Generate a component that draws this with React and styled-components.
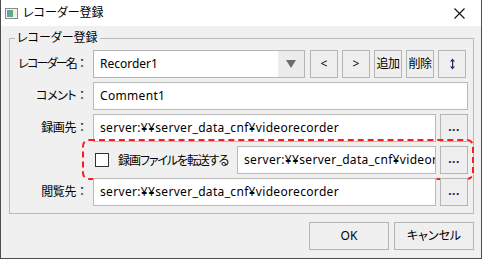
import React from "react";
import styled, { createGlobalStyle } from "styled-components";

const Global = createGlobalStyle`
  html, body { margin: 0; padding: 0; background: #f0f0f0; }
  * { box-sizing: border-box; }
  body {
    font-family: "Noto Sans", "Noto Sans CJK JP", sans-serif;
    font-size: 12px;
    font-feature-settings: "palt";
    color: #000;
  }
`;

const Window = styled.div`
  width: 482px;
  height: 259px;
  display: flex;
  flex-direction: column;
  border: 1px solid #4d4d4d;
  border-top: none;
  background: #f0f0f0;
`;

const TitleBar = styled.div`
  height: 26px;
  flex: none;
  background: #fff;
  display: flex;
  align-items: center;
  padding: 0 0 0 4px;
`;

const TitleText = styled.span`
  margin-left: 5px;
  font-size: 12px;
  flex: 1;
  line-height: 16px;
`;

const CloseButton = styled.div`
  width: 46px;
  height: 26px;
  display: flex;
  align-items: center;
  justify-content: center;
  margin-right: -1px;
`;

const Body = styled.div`
  flex: 1;
  display: flex;
  flex-direction: column;
  padding: 4px 7px 0 8px;
`;

const Group = styled.fieldset`
  margin: 0;
  padding: 4px 5px 7px 0;
  border: 1px solid #b9b9b9;
  min-width: 0;
  height: 184px;
`;

const Legend = styled.legend`
  padding: 0 2px;
  margin-left: 5px;
  line-height: 16px;
  font-size: 12px;
`;

const Form = styled.div`
  display: grid;
  grid-template-columns: 77px 1fr;
  column-gap: 6px;
  row-gap: 4px;
  grid-auto-rows: 28px;
  align-items: stretch;
`;

const Label = styled.div`
  display: flex;
  align-items: center;
  justify-content: flex-end;
  white-space: nowrap;
  line-height: 16px;
  letter-spacing: ${(p) => p.$ls ?? 0}px;
`;

const Colon = styled.span`
  font-feature-settings: normal;
  letter-spacing: 0;
  width: 11px;
  display: inline-block;
`;

const Field = styled.div`
  position: relative;
  display: flex;
  gap: 4px;
  align-items: stretch;
  min-width: 0;
`;

const TextBox = styled.div`
  flex: 1;
  min-width: 0;
  background: #fff;
  border: 1px solid #b9b9b9;
  display: flex;
  align-items: center;
  padding-left: 6px;
  white-space: nowrap;
  overflow: hidden;
  line-height: 16px;
  letter-spacing: 0.33px;
`;

const Combo = styled.div`
  width: 212px;
  flex: none;
  display: flex;
  border: 1px solid #b4b4b4;
  background: #fff;
  margin-right: 1px;
`;

const ComboText = styled.div`
  flex: 1;
  display: flex;
  align-items: center;
  padding-left: 6px;
  line-height: 16px;
`;

const ComboArrow = styled.div`
  width: 26px;
  background: #ececec;
  display: flex;
  align-items: center;
  justify-content: center;
`;

const Btn = styled.div`
  width: 28px;
  flex: none;
  background: #efefef;
  border: 1px solid #b4b4b4;
  display: flex;
  align-items: center;
  justify-content: center;
  white-space: nowrap;
  line-height: 16px;
  font-size: 12px;
  letter-spacing: ${(p) => (p.$tight ? "-0.5px" : "0")};
`;

const Dots = styled.span`
  font-weight: bold;
  letter-spacing: 0.5px;
  color: #1a1a40;
  margin-top: -3px;
`;

const CheckArea = styled.div`
  width: 140px;
  flex: none;
  display: flex;
  align-items: center;
  padding-left: 2px;
  gap: 9px;
  white-space: nowrap;
  letter-spacing: -1.1px;
`;

const CheckBox = styled.div`
  width: 14px;
  height: 14px;
  border: 1px solid #333;
  background: #fff;
  flex: none;
`;

const Highlight = styled.div`
  position: absolute;
  left: -11px;
  right: -6px;
  top: -7px;
  bottom: -6px;
  border: 2px dashed #ff1a1a;
  border-radius: 7px;
  pointer-events: none;
`;

const Footer = styled.div`
  display: flex;
  justify-content: flex-end;
  gap: 5px;
  margin-top: 8px;
`;

const DialogBtn = styled.div`
  width: 80px;
  height: 28px;
  background: #efefef;
  border: 1px solid #b4b4b4;
  display: flex;
  align-items: center;
  justify-content: center;
  line-height: 16px;
`;

const AppIcon = () => (
  <svg width="13" height="11" viewBox="0 0 13 11">
    <rect x="0.5" y="0.5" width="12" height="10" fill="#f4f4f4" stroke="#8a8a8a" />
    <rect x="2" y="2" width="3" height="7" fill="#5aa0c8" />
    <rect x="5" y="2" width="3" height="7" fill="#6fa86a" />
    <rect x="8" y="2" width="3" height="7" fill="#e8eef2" />
  </svg>
);

const CloseIcon = () => (
  <svg width="11" height="11" viewBox="0 0 11 11">
    <path d="M0.5 0.5 L10.5 10.5 M10.5 0.5 L0.5 10.5" stroke="#111" strokeWidth="1.1" />
  </svg>
);

const DownArrow = () => (
  <svg width="10" height="8" viewBox="0 0 10 8">
    <path d="M0 0 H10 L5 8 Z" fill="#6d6d6d" />
  </svg>
);

const UpDown = () => (
  <svg width="5" height="12" viewBox="0 0 5 12">
    <path d="M2.5 0.5 L0 3.5 H5 Z M2.5 11.5 L0 8.5 H5 Z" fill="#2b2b6b" />
    <rect x="2" y="3" width="1.2" height="6" fill="#2b2b6b" />
  </svg>
);

export default function App() {
  return (
    <>
      <Global />
      <Window>
        <TitleBar>
          <AppIcon />
          <TitleText>レコーダー登録</TitleText>
          <CloseButton>
            <CloseIcon />
          </CloseButton>
        </TitleBar>
        <Body>
          <Group>
            <Legend>レコーダー登録</Legend>
            <Form>
              <Label $ls={-1.8}>
                レコーダー名<Colon>：</Colon>
              </Label>
              <Field>
                <Combo>
                  <ComboText>Recorder1</ComboText>
                  <ComboArrow>
                    <DownArrow />
                  </ComboArrow>
                </Combo>
                <Btn>&lt;</Btn>
                <Btn>&gt;</Btn>
                <Btn $tight>追加</Btn>
                <Btn $tight>削除</Btn>
                <Btn>
                  <UpDown />
                </Btn>
              </Field>

              <Label $ls={-0.5}>
                コメント<Colon>：</Colon>
              </Label>
              <Field>
                <TextBox>Comment1</TextBox>
              </Field>

              <Label $ls={-0.4}>
                録画先<Colon>：</Colon>
              </Label>
              <Field>
                <TextBox>server:¥¥server_data_cnf¥videorecorder</TextBox>
                <Btn>
                  <Dots>...</Dots>
                </Btn>
              </Field>

              <div />
              <Field>
                <CheckArea>
                  <CheckBox />
                  <span>録画ファイルを転送する</span>
                </CheckArea>
                <TextBox>server:¥¥server_data_cnf¥videorecorder</TextBox>
                <Btn>
                  <Dots>...</Dots>
                </Btn>
                <Highlight />
              </Field>

              <Label $ls={-0.4}>
                閲覧先<Colon>：</Colon>
              </Label>
              <Field>
                <TextBox>server:¥¥server_data_cnf¥videorecorder</TextBox>
                <Btn>
                  <Dots>...</Dots>
                </Btn>
              </Field>
            </Form>
          </Group>
          <Footer>
            <DialogBtn>OK</DialogBtn>
            <DialogBtn>キャンセル</DialogBtn>
          </Footer>
        </Body>
      </Window>
    </>
  );
}
